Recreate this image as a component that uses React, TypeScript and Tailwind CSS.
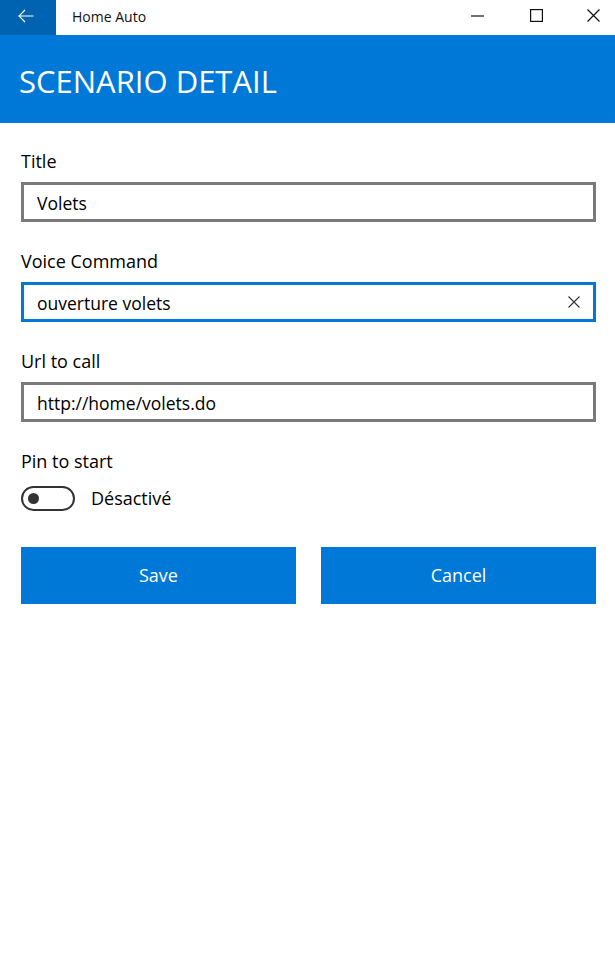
import React from "react";

const font = { fontFamily: '"Open Sans", "Noto Sans", sans-serif' };

function Field({ label, value, focused }: { label: string; value: string; focused?: boolean }) {
  return (
    <div className="flex flex-col">
      <div className="h-[25px] leading-[25px] text-[18px] text-[#000]">{label}</div>
      <div
        className={`mt-[8px] h-[40px] border-[3px] flex items-center pl-[13px] pr-[11px] ${
          focused ? "border-[#0078d7]" : "border-[#7a7a7a]"
        }`}
      >
        <span className="flex-1 text-[17.5px] text-[#000] leading-none pt-[3px]">{value}</span>
        {focused && (
          <svg width="12" height="12" viewBox="0 0 12 12" className="mr-[2px]">
            <path d="M0.5 0.5 L11.5 11.5 M11.5 0.5 L0.5 11.5" stroke="#333" strokeWidth="1.1" fill="none" />
          </svg>
        )}
      </div>
    </div>
  );
}

export default function App() {
  return (
    <div className="w-[615px] h-[956px] bg-white overflow-hidden" style={font}>
      {/* Title bar */}
      <div className="h-[35px] flex items-stretch">
        <div className="w-[56px] bg-[#0063b1] flex items-center justify-center">
          <svg width="16" height="14" viewBox="0 0 16 14" className="-ml-[4px] -mt-[4px]">
            <path d="M15.5 7 H1 M7 1 L1 7 L7 13" stroke="white" strokeWidth="1.1" fill="none" />
          </svg>
        </div>
        <div className="flex-1 flex items-center pl-[16px] text-[14px] text-[#111] -mt-[3px]">Home Auto</div>
        <div className="w-[57px] flex items-center justify-center -mt-[4px]">
          <svg width="13" height="2" viewBox="0 0 13 2" className="-ml-[4px]">
            <path d="M0 1 H13" stroke="#111" strokeWidth="1.2" />
          </svg>
        </div>
        <div className="w-[57px] flex items-center justify-center -mt-[4px]">
          <svg width="13" height="13" viewBox="0 0 13 13">
            <rect x="0.6" y="0.6" width="11.8" height="11.8" stroke="#111" strokeWidth="1.2" fill="none" />
          </svg>
        </div>
        <div className="w-[57px] flex items-center justify-center -mr-[7px] -mt-[4px]">
          <svg width="13" height="13" viewBox="0 0 13 13">
            <path d="M0.5 0.5 L12.5 12.5 M12.5 0.5 L0.5 12.5" stroke="#111" strokeWidth="1.2" fill="none" />
          </svg>
        </div>
      </div>
      {/* Header */}
      <div className="h-[88px] bg-[#0078d7] flex items-center pl-[19px]">
        <h1 className="text-[31px] text-white font-normal leading-none mt-[4px]">SCENARIO DETAIL</h1>
      </div>
      {/* Content */}
      <div className="pl-[21px] pr-[19px] pt-[26px] flex flex-col">
        <Field label="Title" value="Volets" />
        <div className="h-[27px]" />
        <Field label="Voice Command" value="ouverture volets" focused />
        <div className="h-[27px]" />
        <Field label="Url to call" value="http://home/volets.do" />
        <div className="h-[27px]" />
        <div className="h-[25px] leading-[25px] text-[18px] text-[#000]">Pin to start</div>
        <div className="mt-[11px] flex items-center">
          <div className="w-[54px] h-[25px] rounded-full border-[2px] border-[#333] flex items-center pl-[5px]">
            <div className="w-[11px] h-[11px] rounded-full bg-[#333]" />
          </div>
          <span className="ml-[16px] text-[18px] text-[#000]">Désactivé</span>
        </div>
        <div className="mt-[35px] flex gap-[25px]">
          <button className="flex-1 h-[57px] bg-[#0078d7] text-white text-[18px]">Save</button>
          <button className="flex-1 h-[57px] bg-[#0078d7] text-white text-[18px]">Cancel</button>
        </div>
      </div>
    </div>
  );
}
